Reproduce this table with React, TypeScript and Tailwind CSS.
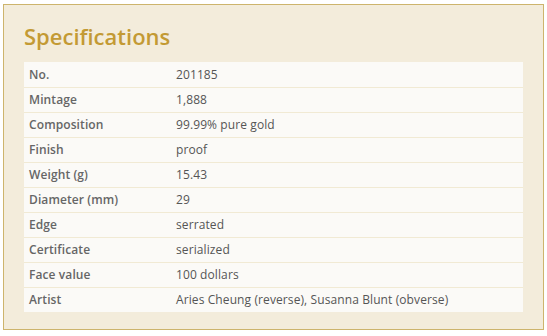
const specs = [
  { label: 'No.', value: '201185' },
  { label: 'Mintage', value: '1,888' },
  { label: 'Composition', value: '99.99% pure gold' },
  { label: 'Finish', value: 'proof' },
  { label: 'Weight (g)', value: '15.43' },
  { label: 'Diameter (mm)', value: '29' },
  { label: 'Edge', value: 'serrated' },
  { label: 'Certificate', value: 'serialized' },
  { label: 'Face value', value: '100 dollars' },
  { label: 'Artist', value: 'Aries Cheung (reverse), Susanna Blunt (obverse)' },
];

export default function App() {
  return (
    <div className="w-[547px] h-[336px] bg-white pt-[4px] pl-[3px]" style={{ fontFamily: '"Open Sans", Lato, sans-serif' }}>
      <div className="w-[541px] h-[326px] border border-[#cdb46c] bg-[#f3ecdb] pt-[17px] pl-[20px] pr-[20px]">
        {/* Title */}
        <h2 className="text-[22px] leading-[28px] font-semibold text-[#c39a34] mb-[12px]">
          Specifications
        </h2>

        {/* Specs table */}
        <div className="bg-[#fbfaf7]">
          {specs.map((row, i) => (
            <div
              key={row.label}
              className={`flex items-center h-[25px] text-[12px] tracking-[0.1px] ${i > 0 ? 'border-t border-[#f1ead4]' : ''}`}
            >
              <span className="w-[152px] pl-[5px] font-semibold text-[#666]">{row.label}</span>
              <span className="text-[#555]">{row.value}</span>
            </div>
          ))}
        </div>
      </div>
    </div>
  );
}
